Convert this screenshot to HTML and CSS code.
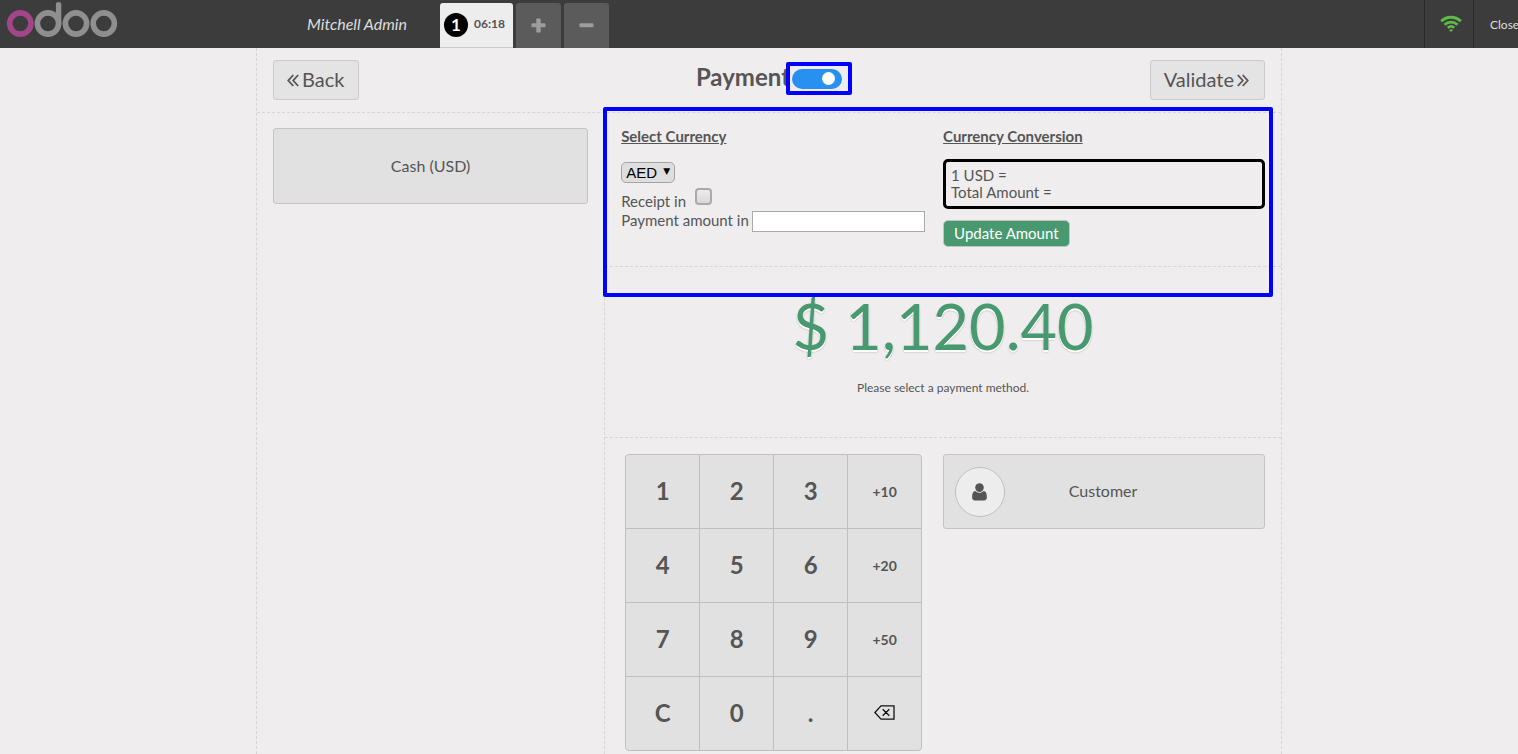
FILE: index.html
```html
<!DOCTYPE html>
<html lang="en">
<head>
<meta charset="utf-8">
<title>Payment</title>
<link rel="stylesheet" href="styles.css">
</head>
<body>
<div class="pos">
  <header class="topbar">
    <svg class="logo" viewBox="0 0 112 38" role="img" aria-label="odoo" fill="none" stroke="#8f8f8f" stroke-width="5.600">
      <circle cx="14.300" cy="23.500" r="10.600" stroke="#a24689"/>
      <circle cx="42" cy="23.500" r="10.600"/>
      <path d="M52.600 23.500V4.800" stroke-width="5.400" stroke-linecap="round"/>
      <circle cx="70" cy="23.500" r="10.600"/>
      <circle cx="97.800" cy="23.500" r="10.600"/>
    </svg>
    <span class="username">Mitchell Admin</span>
    <nav class="orders" aria-label="Orders">
      <button class="order order-active" type="button"><span class="badge">1</span><span class="order-time">06:18</span></button>
      <button class="order order-square" type="button" aria-label="New order">
        <svg width="15" height="15" viewBox="0 0 15 15" fill="#9d9d9d"><path d="M6 .5h3a.7.7 0 0 1 .7.700v4.100h4.100a.7.7 0 0 1 .7.700v2.600a.7.7 0 0 1-.7.700H9.700v4.500a.7.7 0 0 1-.7.700H6a.7.7 0 0 1-.7-.7V9.300H1.200a.7.7 0 0 1-.7-.7V6a.7.7 0 0 1 .7-.7h4.100V1.200A.7.7 0 0 1 6 .5z"/></svg>
      </button>
      <button class="order order-square" type="button" aria-label="Delete order">
        <svg width="15" height="15" viewBox="0 0 15 15" fill="#9d9d9d"><rect x=".5" y="5.300" width="14" height="4" rx="1"/></svg>
      </button>
    </nav>
    <div class="status">
      <button class="status-item status-wifi" type="button" aria-label="Connected">
        <svg width="22" height="17" viewBox="0 0 22 17" fill="none" stroke="#5fb946" stroke-width="2.900">
          <path d="M1.200 6.200C6.700.9 15.300.9 20.800 6.200"/>
          <path d="M4.500 9.700c3.700-3.400 9.300-3.400 13 0"/>
          <path d="M7.700 12.800c2-1.700 4.600-1.700 6.600 0" stroke-width="2.500"/>
          <path d="M11 17l-2-2.100c1.200-1 2.800-1 4 0z" fill="#5fb946" stroke="none"/>
        </svg>
      </button>
      <button class="status-item status-close" type="button">Close</button>
    </div>
  </header>

  <main class="screen">
    <div class="heading">
      <button class="nav-button" type="button">
        <svg width="12" height="13" viewBox="0 0 12 13" fill="none" stroke="#555" stroke-width="1.800"><path d="M6.300 1L1.300 6.500l5 5.500M11.200 1L6.200 6.500l5 5.500"/></svg>Back</button>
      <div class="title-group">
        <h1 class="title">Payment</h1>
        <span class="switch-box"><input class="switch" type="checkbox" role="switch" aria-label="Multi currency payment" checked></span>
      </div>
      <button class="nav-button nav-next" type="button">Validate<svg width="12" height="13" viewBox="0 0 12 13" fill="none" stroke="#555" stroke-width="1.800"><path d="M.8 1l5 5.500-5 5.500M5.700 1l5 5.500-5 5.500"/></svg></button>
    </div>

    <div class="columns">
      <aside class="methods">
        <button class="method" type="button">Cash (USD)</button>
      </aside>

      <div class="payment">
        <section class="currency">
          <div class="currency-col">
            <h2 class="subtitle">Select Currency</h2>
            <div class="picker">
              <select class="picker-select" aria-label="Currency"><option>AED</option></select>
              <span class="picker-arrow" aria-hidden="true">▼</span>
            </div>
            <div class="row row-receipt">
              <label for="receipt">Receipt in</label>
              <input class="check" id="receipt" type="checkbox">
            </div>
            <div class="row">
              <label for="amount">Payment amount in</label>
              <input class="amount-input" id="amount" type="text">
            </div>
          </div>
          <div class="currency-col currency-right">
            <h2 class="subtitle">Currency Conversion</h2>
            <div class="rates">
              <div>1 USD =</div>
              <div>Total Amount =</div>
            </div>
            <button class="update" type="button">Update Amount</button>
          </div>
        </section>

        <section class="due">
          <div class="total">$ 1,120.40</div>
          <div class="message">Please select a payment method.</div>
        </section>

        <section class="bottom">
          <div class="numpad">
            <button class="key" type="button">1</button>
            <button class="key" type="button">2</button>
            <button class="key" type="button">3</button>
            <button class="key key-small" type="button">+10</button>
            <button class="key" type="button">4</button>
            <button class="key" type="button">5</button>
            <button class="key" type="button">6</button>
            <button class="key key-small" type="button">+20</button>
            <button class="key" type="button">7</button>
            <button class="key" type="button">8</button>
            <button class="key" type="button">9</button>
            <button class="key key-small" type="button">+50</button>
            <button class="key" type="button">C</button>
            <button class="key" type="button">0</button>
            <button class="key" type="button">.</button>
            <button class="key" type="button" aria-label="Backspace">
              <svg class="key-icon" width="21" height="15" viewBox="0 0 21 15" fill="none" stroke="#111" stroke-width="1.300"><path d="M7 .9h13v13.200H7L.9 7.500zM8.700 4.200l6.600 6.600M15.300 4.200l-6.600 6.600"/></svg>
            </button>
          </div>
          <button class="customer" type="button">
            <span class="avatar"><svg width="15" height="18" viewBox="0 0 15 18" fill="#555"><circle cx="7.500" cy="4.600" r="4.300"/><path d="M3.300 7.900c2.300 2.400 6.100 2.400 8.400 0 2.200.2 3.200 2.500 3.200 6.300 0 1.900-1 3.200-2.700 3.200H2.800C1.100 17.400.1 16.100.1 14.200c0-3.800 1-6.100 3.200-6.300z"/></svg></span>
            <span class="customer-name">Customer</span>
          </button>
        </section>
      </div>
    </div>
  </main>
</div>
</body>
</html>
```
FILE: styles.css
```css
* {
  box-sizing: border-box;
}

html {
  height: 100%;
  overflow: hidden;
}

body {
  height: 100%;
  margin: 0;
  background: #efedee;
  color: #555;
  font-family: Lato, "Liberation Sans", sans-serif;
  font-size: 16px;
}

button,
input {
  font-family: inherit;
  color: inherit;
}

button {
  margin: 0;
  padding: 0;
}

/* The terminal is a little wider than the window and runs off its right side. */
.pos {
  display: flex;
  flex-direction: column;
  min-height: 100%;
  margin-right: -20px;
}

.topbar {
  display: flex;
  height: 48px;
  background: #3c3c3c;
}

.logo {
  width: 112px;
  height: 38px;
  margin-left: 6px;
}

.username {
  width: 289px;
  margin-right: 33px;
  color: #ddd;
  font-style: italic;
  line-height: 48px;
  text-align: right;
}

.orders {
  display: flex;
  align-items: flex-end;
  gap: 3px;
}

.order {
  display: flex;
  align-items: center;
  justify-content: center;
  height: 45px;
  border: 0;
  border-radius: 3px 3px 0 0;
}

.order-active {
  gap: 6px;
  width: 73px;
  padding-right: 4px;
  border-bottom: 1px solid #ccc;
  background: #ededed;
  font-size: 12px;
  font-weight: 700;
}

.order-square {
  width: 45px;
  background: #5b5b5b;
}

.order-time {
  padding-bottom: 3px;
}

.badge {
  width: 24px;
  height: 24px;
  border-radius: 50%;
  background: #000;
  color: #fff;
  font-size: 17px;
  line-height: 24px;
}

.status {
  display: flex;
  margin-left: auto;
}

.status-item {
  padding: 0 16px;
  border: 0;
  border-left: 1px solid #292929;
  background: none;
  color: #ddd;
  font-size: 12px;
}

.status-close {
  width: 65px;
  text-align: left;
}

.status-wifi {
  width: 49px;
  padding: 0;
}

.status-wifi svg {
  display: block;
  margin: 0 auto 1px 15px;
}

.screen {
  display: flex;
  flex: 1;
  flex-direction: column;
  width: 100%;
  max-width: 1026px;
  margin: 0 auto;
  border: dashed #d6d6d6;
  border-width: 0 1px;
}

.heading {
  display: grid;
  grid-template-columns: 1fr auto 1fr;
  align-items: center;
  height: 65px;
  padding: 0 16px;
  border-bottom: 1px dashed #d6d6d6;
}

.nav-button {
  display: flex;
  align-items: center;
  gap: 3px;
  justify-self: start;
  height: 40px;
  padding: 0 14px 2px 13px;
  border: 1px solid #cacaca;
  border-radius: 3px;
  background: #e4e4e4;
  font-size: 20px;
}

.nav-next {
  justify-self: end;
  padding-right: 15px;
}

.nav-button svg {
  margin-top: 2px;
}

.title-group {
  display: flex;
  align-items: center;
  padding-bottom: 2px;
}

.title {
  margin: 0 2px 4px 0;
  font-size: 24px;
  line-height: 30px;
}

.switch-box {
  position: relative;
  display: flex;
}

.switch-box::after {
  content: "";
  position: absolute;
  inset: -7px -10px -6px -6px;
  border: 4px solid #00f;
  border-radius: 2px;
  pointer-events: none;
}

.switch {
  appearance: none;
  width: 50px;
  height: 20px;
  margin: 0;
  padding: 3px 7px;
  border-radius: 10px;
  background: #2790f0;
}

.switch::before {
  content: "";
  display: block;
  width: 13px;
  height: 13px;
  border-radius: 50%;
  background: #fff;
}

.switch:checked::before {
  margin-left: auto;
}

.columns {
  display: flex;
  flex: 1;
}

.methods {
  width: 34%;
  padding: 15px 16px;
  border-right: 1px dashed #d6d6d6;
}

.method {
  width: 100%;
  height: 76px;
  padding-bottom: 2px;
  border: 1px solid #c4c4c4;
  border-radius: 3px;
  background: #e1e1e1;
  font-size: 16px;
}

.payment {
  flex: 1;
}

.currency {
  position: relative;
  display: grid;
  grid-template-columns: 1fr 1fr;
  min-height: 154px;
  border-bottom: 1px dashed #d6d6d6;
  font-size: 15px;
}

.currency::after {
  content: "";
  position: absolute;
  inset: -6px 8px -31px -2px;
  border: 4px solid #00f;
  border-radius: 2px;
  pointer-events: none;
}

.currency-col {
  padding: 14px 0 0 16px;
}

.currency-right {
  padding: 14px 16px 0 0;
}

.subtitle {
  margin: 0 0 13px;
  font-size: 15px;
  line-height: 19px;
  text-decoration: underline;
}

.picker {
  position: relative;
  width: 54px;
  height: 21px;
  margin: 16px 0 5px;
}

.picker-select {
  appearance: none;
  width: 100%;
  height: 100%;
  padding: 0 4px;
  border: 1px solid #a3a3a3;
  border-radius: 5px;
  background: #dedede;
  color: #000;
  font-family: "Liberation Sans", sans-serif;
  font-size: 15px;
}

.picker-arrow {
  position: absolute;
  top: 3px;
  right: 5px;
  color: #000;
  font-family: "DejaVu Sans", sans-serif;
  font-size: 9px;
  line-height: 13px;
  pointer-events: none;
}

.row {
  display: flex;
  gap: 3px;
  line-height: 19px;
}

.row-receipt {
  gap: 9px;
  height: 23px;
}

.row-receipt label {
  padding-top: 4px;
}

.check {
  appearance: none;
  width: 17px;
  height: 17px;
  margin: 0;
  border: 2px solid #aaa;
  border-radius: 4px;
  background: linear-gradient(#ececec, #d9d9d9);
}

.check:checked {
  background: #2790f0;
}

.amount-input {
  width: 173px;
  height: 21px;
  border: 1px solid #a9a9a9;
  background: #fff;
  font-size: 15px;
}

.rates {
  padding: 5px;
  border: 3px solid #000;
  border-radius: 5px;
  line-height: 17px;
}

.update {
  height: 27px;
  margin-top: 11px;
  padding: 0 10px 1px;
  border: 1px solid #c4c4c4;
  border-radius: 5px;
  background: #499970;
  color: #fff;
  font-size: 15px;
}

.due {
  height: 171px;
  padding-top: 20px;
  border-bottom: 1px dashed #d6d6d6;
  text-align: center;
}

.total {
  color: #499970;
  font-size: 63px;
  line-height: 78px;
  text-shadow: 0 2px #fff, 0 2px 2px rgba(0, 0, 0, 0.3);
}

.message {
  margin-top: 14px;
  font-size: 12px;
  line-height: 18px;
}

.bottom {
  display: grid;
  grid-template-columns: 338px 1fr;
  align-items: start;
  padding: 16px 16px 3px 0;
}

.numpad {
  display: grid;
  grid-template-columns: repeat(4, 73px);
  grid-auto-rows: 73px;
  gap: 1px;
  justify-self: start;
  margin-left: 20px;
  overflow: hidden;
  border: 1px solid #bfbfbf;
  border-radius: 4px;
  background: #bfbfbf;
}

.key {
  padding-bottom: 2px;
  border: 0;
  background: #e1e1e1;
  font-size: 24px;
  font-weight: 700;
}

.key-small {
  padding: 0;
  font-size: 14px;
}

.key-icon {
  display: block;
  margin: 0 auto;
}

.customer {
  display: flex;
  align-items: center;
  height: 75px;
  padding: 0 11px;
  border: 1px solid #c4c4c4;
  border-radius: 3px;
  background: #e1e1e1;
  font-size: 16px;
}

.avatar {
  display: flex;
  align-items: center;
  justify-content: center;
  width: 50px;
  height: 50px;
  padding-right: 1px;
  border: 1px solid #bfbfbf;
  border-radius: 50%;
  background: #ededed;
}

.customer-name {
  flex: 1;
  padding: 0 52px 2px 0;
}
```
